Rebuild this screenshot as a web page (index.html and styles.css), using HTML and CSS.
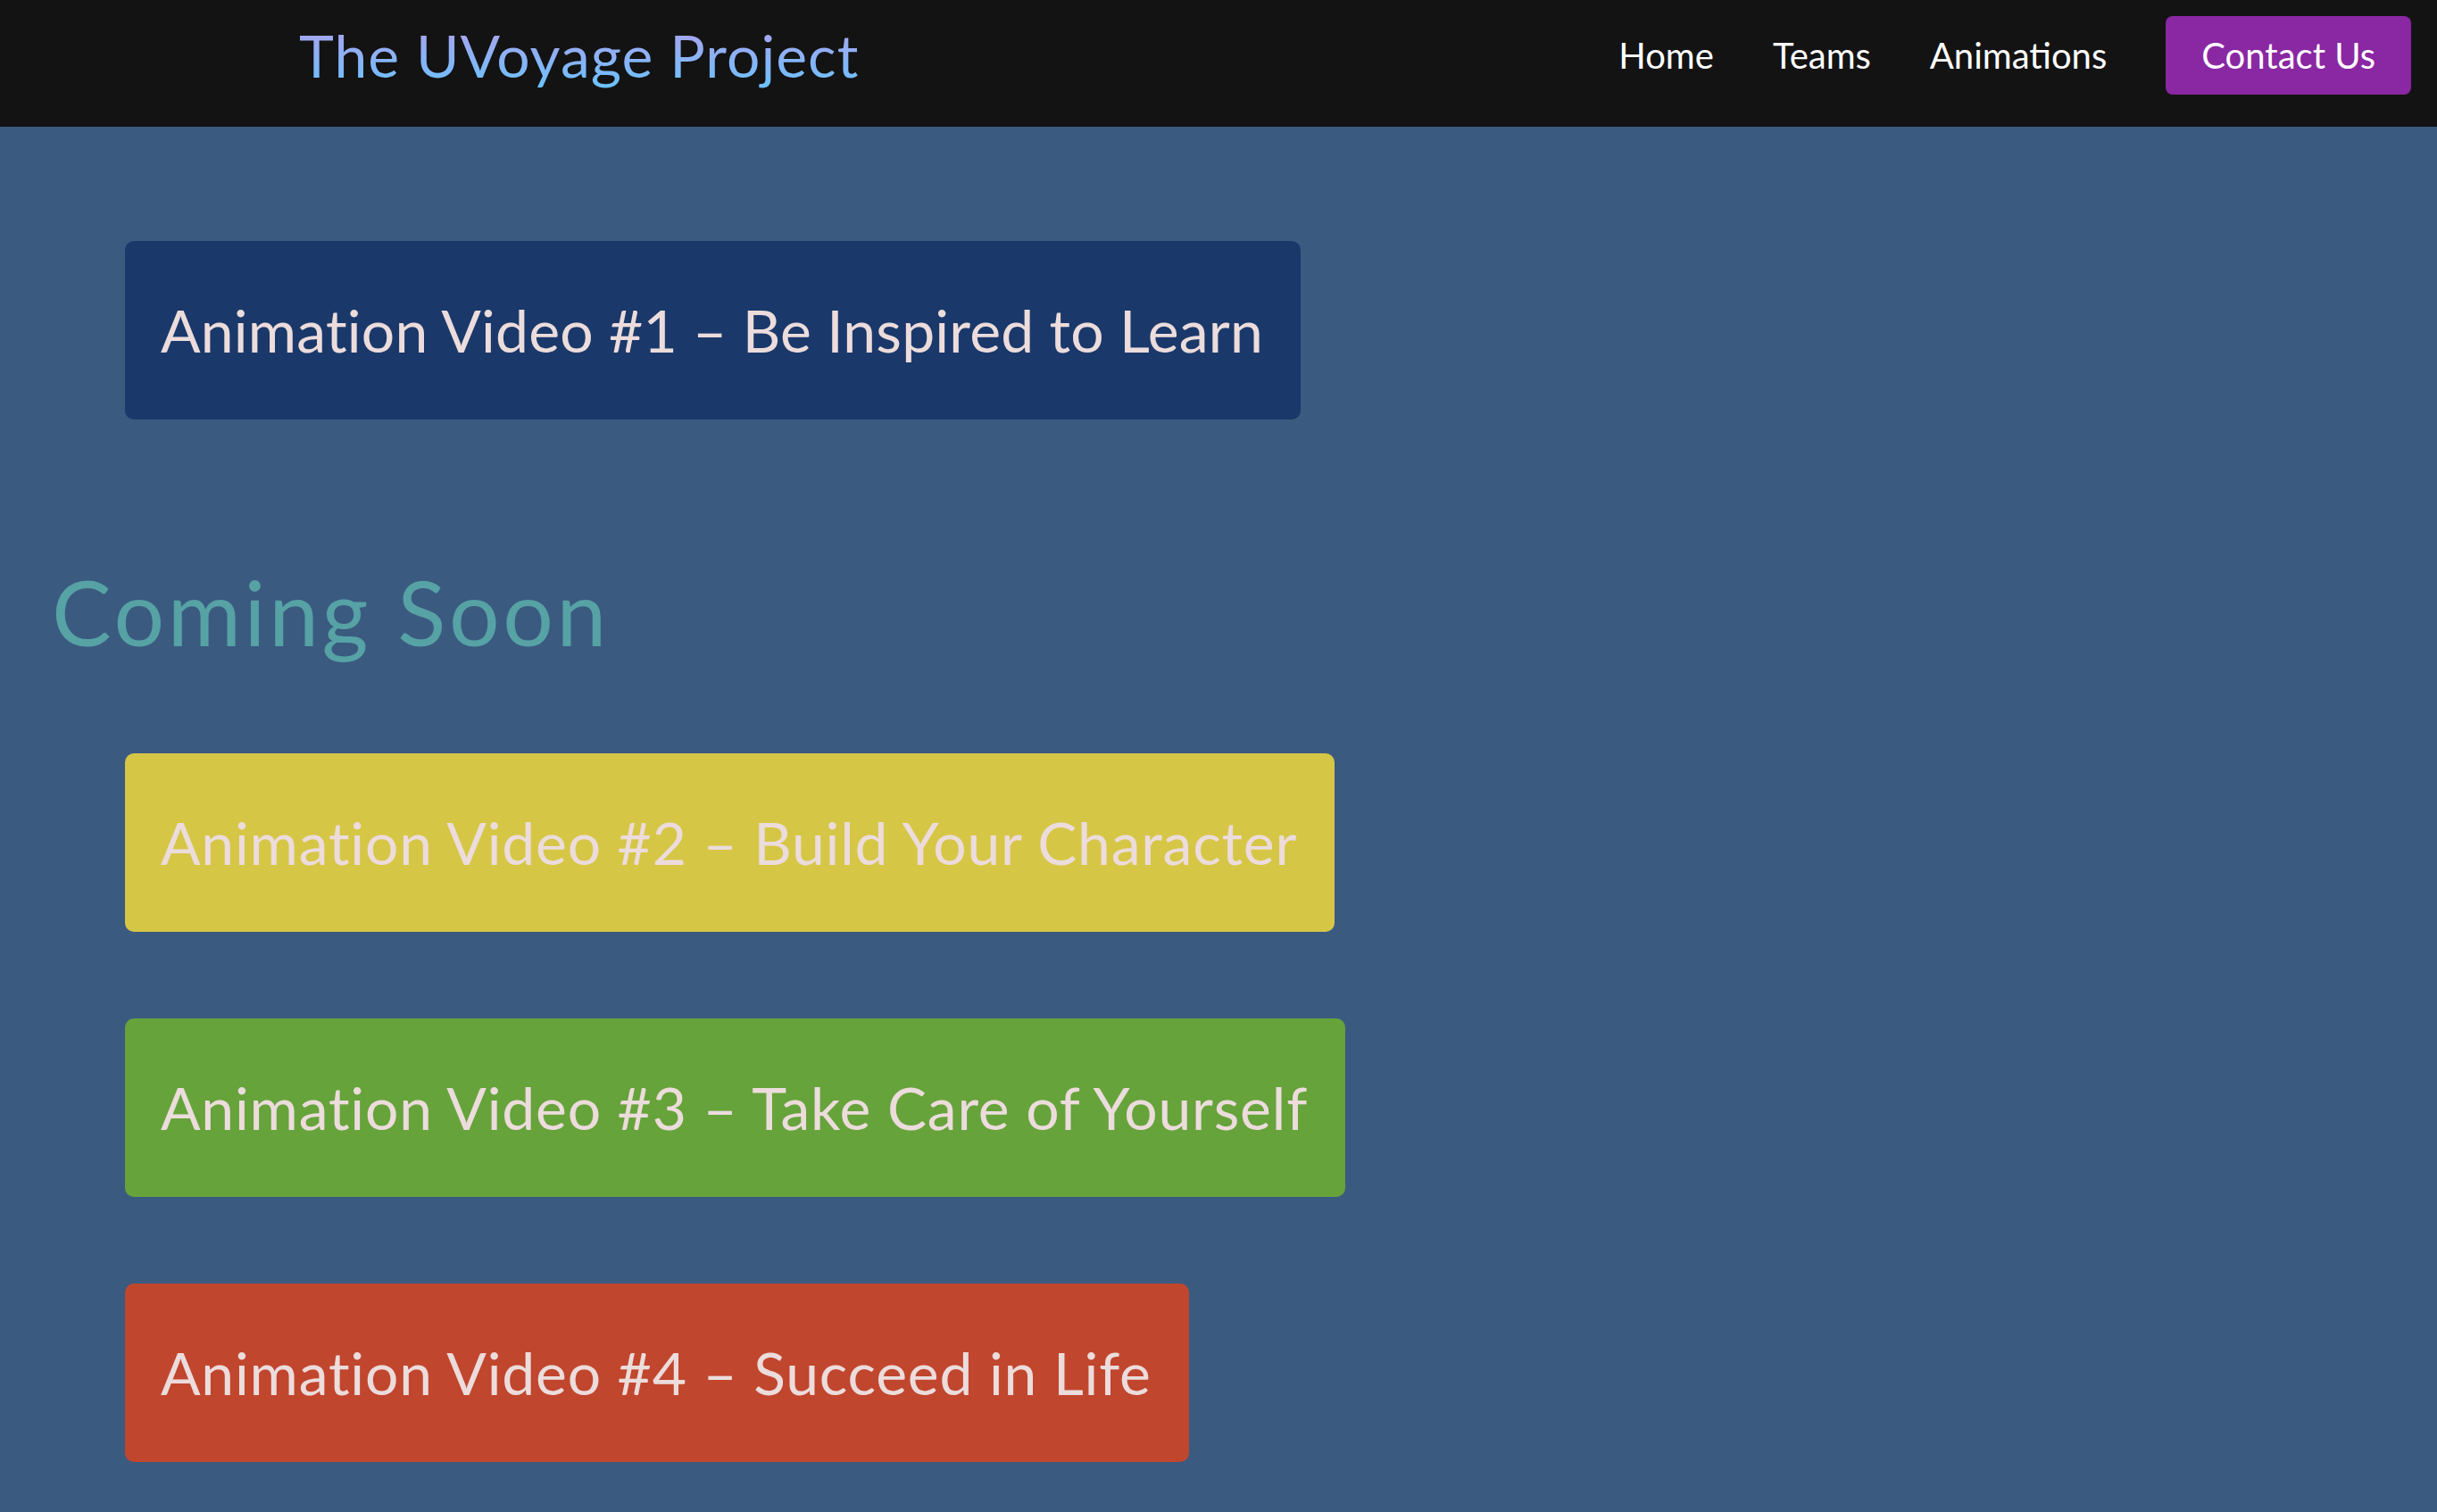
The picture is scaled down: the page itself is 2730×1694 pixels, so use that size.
FILE: index.html
```html
<!DOCTYPE html>
<html lang="en">
<head>
<meta charset="utf-8">
<title>The UVoyage Project</title>
<link rel="stylesheet" href="styles.css">
</head>
<body>
<header class="navbar">
  <a class="brand" href="#">The UVoyage Project</a>
  <nav class="nav-links">
    <a class="nav-link" href="#">Home</a>
    <a class="nav-link" href="#">Teams</a>
    <a class="nav-link" href="#">Animations</a>
    <a class="nav-contact" href="#">Contact Us</a>
  </nav>
</header>
<main class="content">
  <div class="video-list first">
    <a class="video video-blue" href="#">Animation Video #1 – Be Inspired to Learn</a>
  </div>
  <h2 class="section-title">Coming Soon</h2>
  <div class="video-list">
    <a class="video video-yellow" href="#">Animation Video #2 – Build Your Character</a>
    <a class="video video-green" href="#">Animation Video #3 – Take Care of Yourself</a>
    <a class="video video-red" href="#">Animation Video #4 – Succeed in Life</a>
  </div>
</main>
</body>
</html>
```
FILE: styles.css
```css
* { box-sizing: border-box; }
html, body { margin: 0; padding: 0; }
body {
  background: #3b5a80;
  font-family: Lato, "Open Sans", sans-serif;
  min-height: 1694px;
}
a { text-decoration: none; }

.navbar {
  height: 142px;
  background: #131313;
  display: flex;
  align-items: center;
  justify-content: space-between;
  padding: 0 29px 18px 335px;
}
.brand {
  font-size: 66px;
  line-height: 1.2;
  letter-spacing: 1px;
  background: linear-gradient(180deg, #a3a6ef 20%, #6fc0ff 90%);
  -webkit-background-clip: text;
  background-clip: text;
  color: transparent;
}
.nav-links {
  display: flex;
  align-items: center;
  gap: 66px;
}
.nav-link {
  color: #ffffff;
  font-size: 40px;
}
.nav-contact {
  color: #ffffff;
  font-size: 40px;
  background: #8a27a3;
  border-radius: 8px;
  height: 88px;
  line-height: 88px;
  padding: 0 40px;
}

.content {
  padding: 0 58px;
}
.video-list {
  display: flex;
  flex-direction: column;
  align-items: flex-start;
  gap: 97px;
  margin-left: 82px;
}
.video-list.first { padding-top: 128px; }
.video {
  display: block;
  height: 200px;
  line-height: 200px;
  padding: 0 42px 0 40px;
  font-size: 66px;
  letter-spacing: 0.6px;
  color: #ecdcdc;
  border-radius: 10px;
  white-space: nowrap;
}
.video-blue { background: #1a396a; letter-spacing: 0.2px; }
.video-yellow { background: #d6c646; letter-spacing: 0.8px; }
.video-green { background: #66a33b; letter-spacing: 0.8px; }
.video-red { background: #c1462e; letter-spacing: 0.8px; }

.section-title {
  margin: 155px 0 99px;
  font-size: 100px;
  font-weight: 400;
  line-height: 1.2;
  letter-spacing: 3.6px;
  color: #56a2a5;
}
```
